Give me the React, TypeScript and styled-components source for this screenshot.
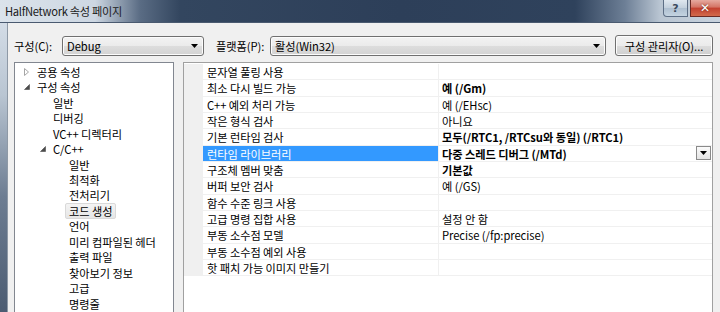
import React from "react";
import styled, { createGlobalStyle } from "styled-components";

const GlobalStyle = createGlobalStyle`
  html, body { margin: 0; padding: 0; width: 720px; height: 312px; overflow: hidden; }
  body {
    font-family: "Noto Sans CJK KR", "Noto Sans", sans-serif;
    font-size: 11.2px;
    letter-spacing: -0.05px;
    color: #000;
  }
`;

const Window = styled.div`
  width: 720px;
  height: 312px;
  display: flex;
  flex-direction: column;
  overflow: hidden;
`;

const TitleBar = styled.div`
  height: 23px;
  flex: none;
  display: flex;
  align-items: flex-start;
  background: linear-gradient(
    to right,
    #dbe3eb 0px,
    #cdd7e2 95px,
    #5a6c84 140px,
    #33465f 180px,
    #2d3f59 400px,
    #2f425c 575px,
    #6d7f96 625px,
    #b9c5d2 660px,
    #c9d3de 720px
  );
  box-shadow: inset 0 -1px 0 #4a5a70;
`;

const Title = styled.div`
  padding: 3px 0 0 5px;
  font-size: 11.2px;
  letter-spacing: -0.3px;
  line-height: 16px;
  color: #1a1a1a;
`;

const Captions = styled.div`
  margin-left: auto;
  display: flex;
  gap: 2px;
  margin-right: -4px;
`;

const HelpButton = styled.div`
  width: 25px;
  height: 17px;
  box-sizing: border-box;
  border: 1px solid #5d6e85;
  border-top: none;
  border-radius: 0 0 0 4px;
  background: linear-gradient(to bottom, #dfe7ef, #c2cfdc 50%, #aebfd0 51%, #c4d3e1);
  color: #3b4a5e;
  font-family: "DejaVu Sans", sans-serif;
  font-size: 11px;
  font-weight: bold;
  display: flex;
  align-items: center;
  justify-content: center;
`;

const CloseButton = styled.div`
  width: 34px;
  height: 17px;
  box-sizing: border-box;
  border: 1px solid #6b2a24;
  border-top: none;
  background: linear-gradient(to bottom, #e6a99f, #d47364 45%, #c3402f 50%, #d26a4c);
  color: #fff;
  font-family: "DejaVu Sans", sans-serif;
  font-size: 12px;
  font-weight: bold;
  display: flex;
  align-items: center;
  justify-content: flex-start;
  padding-left: 9px;
  text-shadow: 0 0 2px #5a1a10;
`;

const Main = styled.div`
  flex: 1;
  display: flex;
  min-height: 0;
`;

const SideFrame = styled.div`
  width: 7px;
  flex: none;
  background: linear-gradient(to bottom, #d3dce6 0%, #b9c5d2 25%, #6d7d92 60%, #4c5c72 100%);
  border-right: 1px solid #8e99a6;
`;

const Body = styled.div`
  flex: 1;
  background: #f0f0f0;
  padding: 12px 0 0 6px;
  display: flex;
  flex-direction: column;
  min-width: 0;
`;

const Toolbar = styled.div`
  display: flex;
  align-items: center;
  height: 21px;
`;

const Label = styled.span<{ $width: number }>`
  width: ${(p) => p.$width}px;
  line-height: 20px;
  white-space: nowrap;
  flex: none;
`;

const Combo = styled.div<{ $width: number; $after: number }>`
  width: ${(p) => p.$width}px;
  margin-right: ${(p) => p.$after}px;
  flex: none;
  height: 20px;
  box-sizing: border-box;
  border: 1px solid #707070;
  border-radius: 3px;
  background: linear-gradient(to bottom, #f3f3f3 0%, #ebebeb 50%, #dddddd 51%, #d3d3d3 100%);
  display: flex;
  align-items: center;
  padding: 0 4px 0 4px;
  box-shadow: inset 0 0 0 1px #fcfcfc;
`;

const ComboText = styled.span`
  flex: 1;
  line-height: 18px;
`;

const Arrow = styled.svg`
  flex: none;
  margin-right: 1px;
`;

const Button = styled.div`
  width: 98px;
  flex: none;
  height: 21px;
  box-sizing: border-box;
  border: 1px solid #707070;
  border-radius: 3px;
  background: linear-gradient(to bottom, #f2f2f2 0%, #ebebeb 50%, #dddddd 51%, #cfcfcf 100%);
  box-shadow: inset 0 0 0 1px #fcfcfc;
  display: flex;
  align-items: center;
  justify-content: center;
  white-space: nowrap;
`;

const Panels = styled.div`
  display: flex;
  gap: 9px;
  margin-top: 6px;
  flex: 1;
`;

const TreePanel = styled.div`
  width: 160px;
  height: 260px;
  box-sizing: border-box;
  border: 1px solid #828790;
  background: #fff;
  padding-top: 1px;
  flex: none;
`;

const TreeRow = styled.div<{ $level: number }>`
  height: 15.47px;
  display: flex;
  align-items: center;
  padding-left: ${(p) => 9 + p.$level * 16}px;
  white-space: nowrap;
  line-height: 15px;
`;

const Expander = styled.span`
  width: 12px;
  flex: none;
  display: flex;
  align-items: center;
`;

const TreeText = styled.span<{ $selected?: boolean }>`
  padding: 0 3px;
  margin-left: -3px;
  border: 1px solid ${(p) => (p.$selected ? "#d9d9d9" : "transparent")};
  border-radius: 2px;
  background: ${(p) => (p.$selected ? "linear-gradient(to bottom, #f4f4f4, #e6e6e6)" : "transparent")};
  line-height: 14px;
`;

const GridPanel = styled.div`
  width: 530px;
  height: 260px;
  box-sizing: border-box;
  border: 1px solid #a0a0a0;
  background: #fff;
  padding-top: 1px;
  flex: none;
`;

const GridRow = styled.div`
  display: flex;
  height: 16.33px;
`;

const Margin = styled.div`
  width: 19px;
  flex: none;
  background: #f0f0f0;
`;

const NameCell = styled.div<{ $selected?: boolean }>`
  width: 235px;
  flex: none;
  box-sizing: border-box;
  padding: 1px 0 0 4px;
  border-bottom: 1px solid #f0f0f0;
  background: ${(p) => (p.$selected ? "#3399ff" : "#fff")};
  color: ${(p) => (p.$selected ? "#fff" : "#000")};
  line-height: 14px;
  white-space: nowrap;
  overflow: hidden;
`;

const ValueCell = styled.div<{ $bold?: boolean }>`
  flex: 1;
  box-sizing: border-box;
  border-left: 1px solid #f0f0f0;
  border-bottom: 1px solid #f0f0f0;
  padding: 1px 0 0 3px;
  line-height: 14px;
  font-weight: ${(p) => (p.$bold ? "bold" : "normal")};
  white-space: nowrap;
  display: flex;
  align-items: flex-start;
`;

const ValueText = styled.span`
  flex: 1;
`;

const DropButton = styled.div`
  width: 15px;
  height: 14px;
  box-sizing: border-box;
  border: 1px solid #8a8a8a;
  background: linear-gradient(to bottom, #fbfbfb, #e4e4e4);
  margin: -1px 1px 0 0;
  display: flex;
  align-items: center;
  justify-content: center;
`;

const DownArrow = ({ w = 7 }: { w?: number }) => (
  <Arrow width={w} height={4} viewBox="0 0 7 4">
    <polygon points="0,0 7,0 3.5,4" fill="#000" />
  </Arrow>
);

const Collapsed = () => (
  <svg width="5" height="8" viewBox="0 0 5 8">
    <polygon points="0.5,0.5 4.5,4 0.5,7.5" fill="#fff" stroke="#a6a6a6" strokeWidth="1" />
  </svg>
);

const Expanded = () => (
  <svg width="6" height="6" viewBox="0 0 6 6">
    <polygon points="5.5,0.5 5.5,5.5 0.5,5.5" fill="#4b4b4b" stroke="#4b4b4b" strokeWidth="0.6" />
  </svg>
);

type TreeItem = { label: string; level: number; exp?: "c" | "e"; selected?: boolean };

const tree: TreeItem[] = [
  { label: "공용 속성", level: 0, exp: "c" },
  { label: "구성 속성", level: 0, exp: "e" },
  { label: "일반", level: 1 },
  { label: "디버깅", level: 1 },
  { label: "VC++ 디렉터리", level: 1 },
  { label: "C/C++", level: 1, exp: "e" },
  { label: "일반", level: 2 },
  { label: "최적화", level: 2 },
  { label: "전처리기", level: 2 },
  { label: "코드 생성", level: 2, selected: true },
  { label: "언어", level: 2 },
  { label: "미리 컴파일된 헤더", level: 2 },
  { label: "출력 파일", level: 2 },
  { label: "찾아보기 정보", level: 2 },
  { label: "고급", level: 2 },
  { label: "명령줄", level: 2 },
];

type Prop = { name: string; value: string; bold?: boolean; selected?: boolean };

const props: Prop[] = [
  { name: "문자열 풀링 사용", value: "" },
  { name: "최소 다시 빌드 가능", value: "예 (/Gm)", bold: true },
  { name: "C++ 예외 처리 가능", value: "예 (/EHsc)" },
  { name: "작은 형식 검사", value: "아니요" },
  { name: "기본 런타임 검사", value: "모두(/RTC1, /RTCsu와 동일) (/RTC1)", bold: true },
  { name: "런타임 라이브러리", value: "다중 스레드 디버그 (/MTd)", bold: true, selected: true },
  { name: "구조체 멤버 맞춤", value: "기본값", bold: true },
  { name: "버퍼 보안 검사", value: "예 (/GS)" },
  { name: "함수 수준 링크 사용", value: "" },
  { name: "고급 명령 집합 사용", value: "설정 안 함" },
  { name: "부동 소수점 모델", value: "Precise (/fp:precise)" },
  { name: "부동 소수점 예외 사용", value: "" },
  { name: "핫 패치 가능 이미지 만들기", value: "" },
];

export default function App() {
  return (
    <>
      <GlobalStyle />
      <Window>
        <TitleBar>
          <Title>HalfNetwork 속성 페이지</Title>
          <Captions>
            <HelpButton>?</HelpButton>
            <CloseButton>✕</CloseButton>
          </Captions>
        </TitleBar>
        <Main>
          <SideFrame />
          <Body>
            <Toolbar>
              <Label $width={48}>구성(C):</Label>
              <Combo $width={142} $after={12}>
                <ComboText>Debug</ComboText>
                <DownArrow />
              </Combo>
              <Label $width={54}>플랫폼(P):</Label>
              <Combo $width={336} $after={9}>
                <ComboText>활성(Win32)</ComboText>
                <DownArrow />
              </Combo>
              <Button>구성 관리자(O)...</Button>
            </Toolbar>
            <Panels>
              <TreePanel>
                {tree.map((t, i) => (
                  <TreeRow key={i} $level={t.level}>
                    <Expander>
                      {t.exp === "c" ? <Collapsed /> : t.exp === "e" ? <Expanded /> : null}
                    </Expander>
                    <TreeText $selected={t.selected}>{t.label}</TreeText>
                  </TreeRow>
                ))}
              </TreePanel>
              <GridPanel>
                {props.map((p, i) => (
                  <GridRow key={i}>
                    <Margin />
                    <NameCell $selected={p.selected}>{p.name}</NameCell>
                    <ValueCell $bold={p.bold}>
                      <ValueText>{p.value}</ValueText>
                      {p.selected && (
                        <DropButton>
                          <DownArrow w={7} />
                        </DropButton>
                      )}
                    </ValueCell>
                  </GridRow>
                ))}
              </GridPanel>
            </Panels>
          </Body>
        </Main>
      </Window>
    </>
  );
}
